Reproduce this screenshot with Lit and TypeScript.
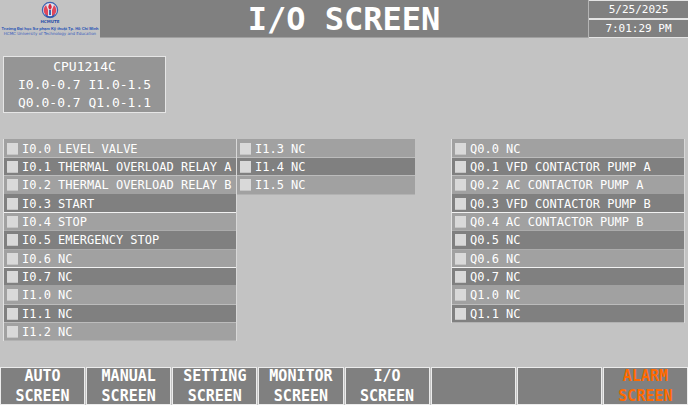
import { LitElement, html, css, svg } from "lit";
import { customElement, property } from "lit/decorators.js";

const INPUTS = [
  "I0.0 LEVEL VALVE",
  "I0.1 THERMAL OVERLOAD RELAY A",
  "I0.2 THERMAL OVERLOAD RELAY B",
  "I0.3 START",
  "I0.4 STOP",
  "I0.5 EMERGENCY STOP",
  "I0.6 NC",
  "I0.7 NC",
  "I1.0 NC",
  "I1.1 NC",
  "I1.2 NC",
];
const MORE_INPUTS = ["I1.3 NC", "I1.4 NC", "I1.5 NC"];
const OUTPUTS = [
  "Q0.0 NC",
  "Q0.1 VFD CONTACTOR PUMP A",
  "Q0.2 AC CONTACTOR PUMP A",
  "Q0.3 VFD CONTACTOR PUMP B",
  "Q0.4 AC CONTACTOR PUMP B",
  "Q0.5 NC",
  "Q0.6 NC",
  "Q0.7 NC",
  "Q1.0 NC",
  "Q1.1 NC",
];
const SCREENS = ["AUTO", "MANUAL", "SETTING", "MONITOR", "I/O", "", "", "ALARM"];

@customElement("io-list")
class IoList extends LitElement {
  @property({ attribute: false }) points: string[] = [];

  static styles = css`
    :host {
      display: block;
    }
    .list {
      display: grid;
      grid-auto-rows: 18px 18px 19px;
      margin: 0;
      padding: 0;
      list-style: none;
      border-bottom: 1px solid #b2b2b2;
    }
    .point {
      display: flex;
      align-items: center;
      gap: 4px;
      padding-left: 3px;
      background: #a1a1a1;
      border-top: 1px solid #bcbcbc;
      color: #fff;
      font-size: 12px;
      line-height: 16px;
      white-space: pre;
    }
    .point:nth-child(even) {
      background: #808080;
    }
    .point:nth-child(1) {
      border-top-color: #a1a1a1;
    }
    .point:nth-child(5),
    .point:nth-child(8) {
      border-top-color: #f2f2f2;
    }
    .point:nth-child(6),
    .point:nth-child(7) {
      border-top-color: #acacac;
    }
    .point:nth-child(4),
    .point:nth-child(9) {
      border-top-color: transparent;
    }
    .lamp {
      appearance: none;
      flex: none;
      width: 11px;
      height: 12px;
      margin: 0;
      background: #d9d9d9;
      border-bottom: 1px solid #c4c4c4;
    }
  `;

  render() {
    return html`<ul class="list">
      ${this.points.map(
        (p, i) => html`<li class="point">
          <input class="lamp" type="checkbox" id="p${i}" /><label for="p${i}">${p}</label>
        </li>`
      )}
    </ul>`;
  }
}

@customElement("app-root")
class AppRoot extends LitElement {
  static styles = css`
    :host {
      display: flex;
      flex-direction: column;
      min-height: 100vh;
      box-sizing: border-box;
      background: #c3c3c3;
      color: #fff;
      font-family: "DejaVu Sans Mono", monospace;
    }
    .header {
      display: grid;
      grid-template-columns: 100px 1fr 100px;
      height: 38px;
    }
    .logo {
      width: 100px;
      height: 38px;
    }
    .brand {
      font: bold 4px "DejaVu Sans", sans-serif;
      fill: #2a4fa8;
    }
    .name {
      font: bold 4px "Liberation Sans", sans-serif;
      fill: #2450b4;
    }
    .name-en {
      font: 4px "DejaVu Sans", sans-serif;
      fill: #3a5fbe;
    }
    .title {
      margin: 0;
      background: #808080;
      border-bottom: 1px solid #a0a0a0;
      font-size: 32px;
      line-height: 39px;
      font-weight: bold;
      text-align: center;
      height: 37px;
    }
    .clock {
      display: grid;
      grid-template-rows: 1fr 1fr;
      border-left: 1px solid #b4b4b4;
    }
    .cell {
      background: #808080;
      border-top: 1px solid #e4e4e4;
      border-bottom: 1px solid #e4e4e4;
      font-size: 11px;
      line-height: 17px;
      text-align: center;
    }
    .main {
      flex: 1;
      padding: 18px 3px 26px;
    }
    .cpu {
      width: fit-content;
      padding: 1px 14px 0;
      margin-bottom: 26px;
      background: #959595;
      border: 1px solid #e6e6e6;
      font-size: 13px;
      line-height: 18px;
      text-align: center;
    }
    .line {
      margin: 0;
    }
    .lists {
      display: grid;
      grid-template-columns: 234fr 178fr 36fr 234fr;
      align-items: start;
    }
    .framed {
      border-left: 1px solid #e2e2e2;
      border-right: 1px solid #d8d8d8;
    }
    .outputs {
      grid-column: 4;
    }
    .nav {
      display: grid;
      grid-template-columns: repeat(8, 1fr);
      column-gap: 1px;
    }
    .tab {
      display: flex;
      align-items: center;
      justify-content: center;
      height: 38px;
      padding: 0;
      border: 1px solid #ececec;
      border-radius: 0;
      background: #808080;
      color: #fff;
      font: bold 15px/20px "DejaVu Sans Mono", monospace;
      white-space: pre-line;
      overflow: hidden;
    }
    .alarm {
      color: #ff6a00;
    }
  `;

  private logo() {
    return svg`<svg class="logo" viewBox="0 0 100 38" role="img" aria-label="HCMUTE">
      <circle cx="50" cy="10" r="7.600" fill="#dfe3ee" stroke="#3f62b0" stroke-width="1.200"/>
      <path d="M46 5A6.500 6.500 0 0 0 46 15L48 16.500V10Z" fill="#e0475a"/>
      <path d="M54 5A6.500 6.500 0 0 1 54 15L52 16.500V10Z" fill="#e0475a"/>
      <path d="M50 3.500C52.500 6.500 52 8 50 10C48 8 47.500 6.500 50 3.500Z" fill="#d8263c"/>
      <path d="M49 10H51V15H49Z" fill="#3f62b0"/>
      <path d="M44.500 13.500Q50 19 55.500 13.500L53.500 17Q50 18.500 46.500 17Z" fill="#2d55ac"/>
      <text class="brand" x="50" y="23" text-anchor="middle">HCMUTE</text>
      <text class="name" x="50" y="30" text-anchor="middle">Trường Đại học Sư phạm Kỹ thuật Tp. Hồ Chí Minh</text>
      <text class="name-en" x="50" y="35" text-anchor="middle">HCMC University of Technology and Education</text>
    </svg>`;
  }

  render() {
    return html`
      <header class="header">
        ${this.logo()}
        <h1 class="title">I/O SCREEN</h1>
        <div class="clock">
          <time class="cell">5/25/2025</time>
          <time class="cell">7:01:29 PM</time>
        </div>
      </header>
      <main class="main">
        <section class="cpu">
          <p class="line">CPU1214C</p>
          <p class="line">I0.0-0.7 I1.0-1.5</p>
          <p class="line">Q0.0-0.7 Q1.0-1.1</p>
        </section>
        <div class="lists">
          <io-list class="framed" .points=${INPUTS}></io-list>
          <io-list .points=${MORE_INPUTS}></io-list>
          <io-list class="framed outputs" .points=${OUTPUTS}></io-list>
        </div>
      </main>
      <nav class="nav">
        ${SCREENS.map(
          (s) => html`<button class="tab ${s === "ALARM" ? "alarm" : ""}">${s ? `${s}\nSCREEN` : ""}</button>`
        )}
      </nav>
    `;
  }
}
